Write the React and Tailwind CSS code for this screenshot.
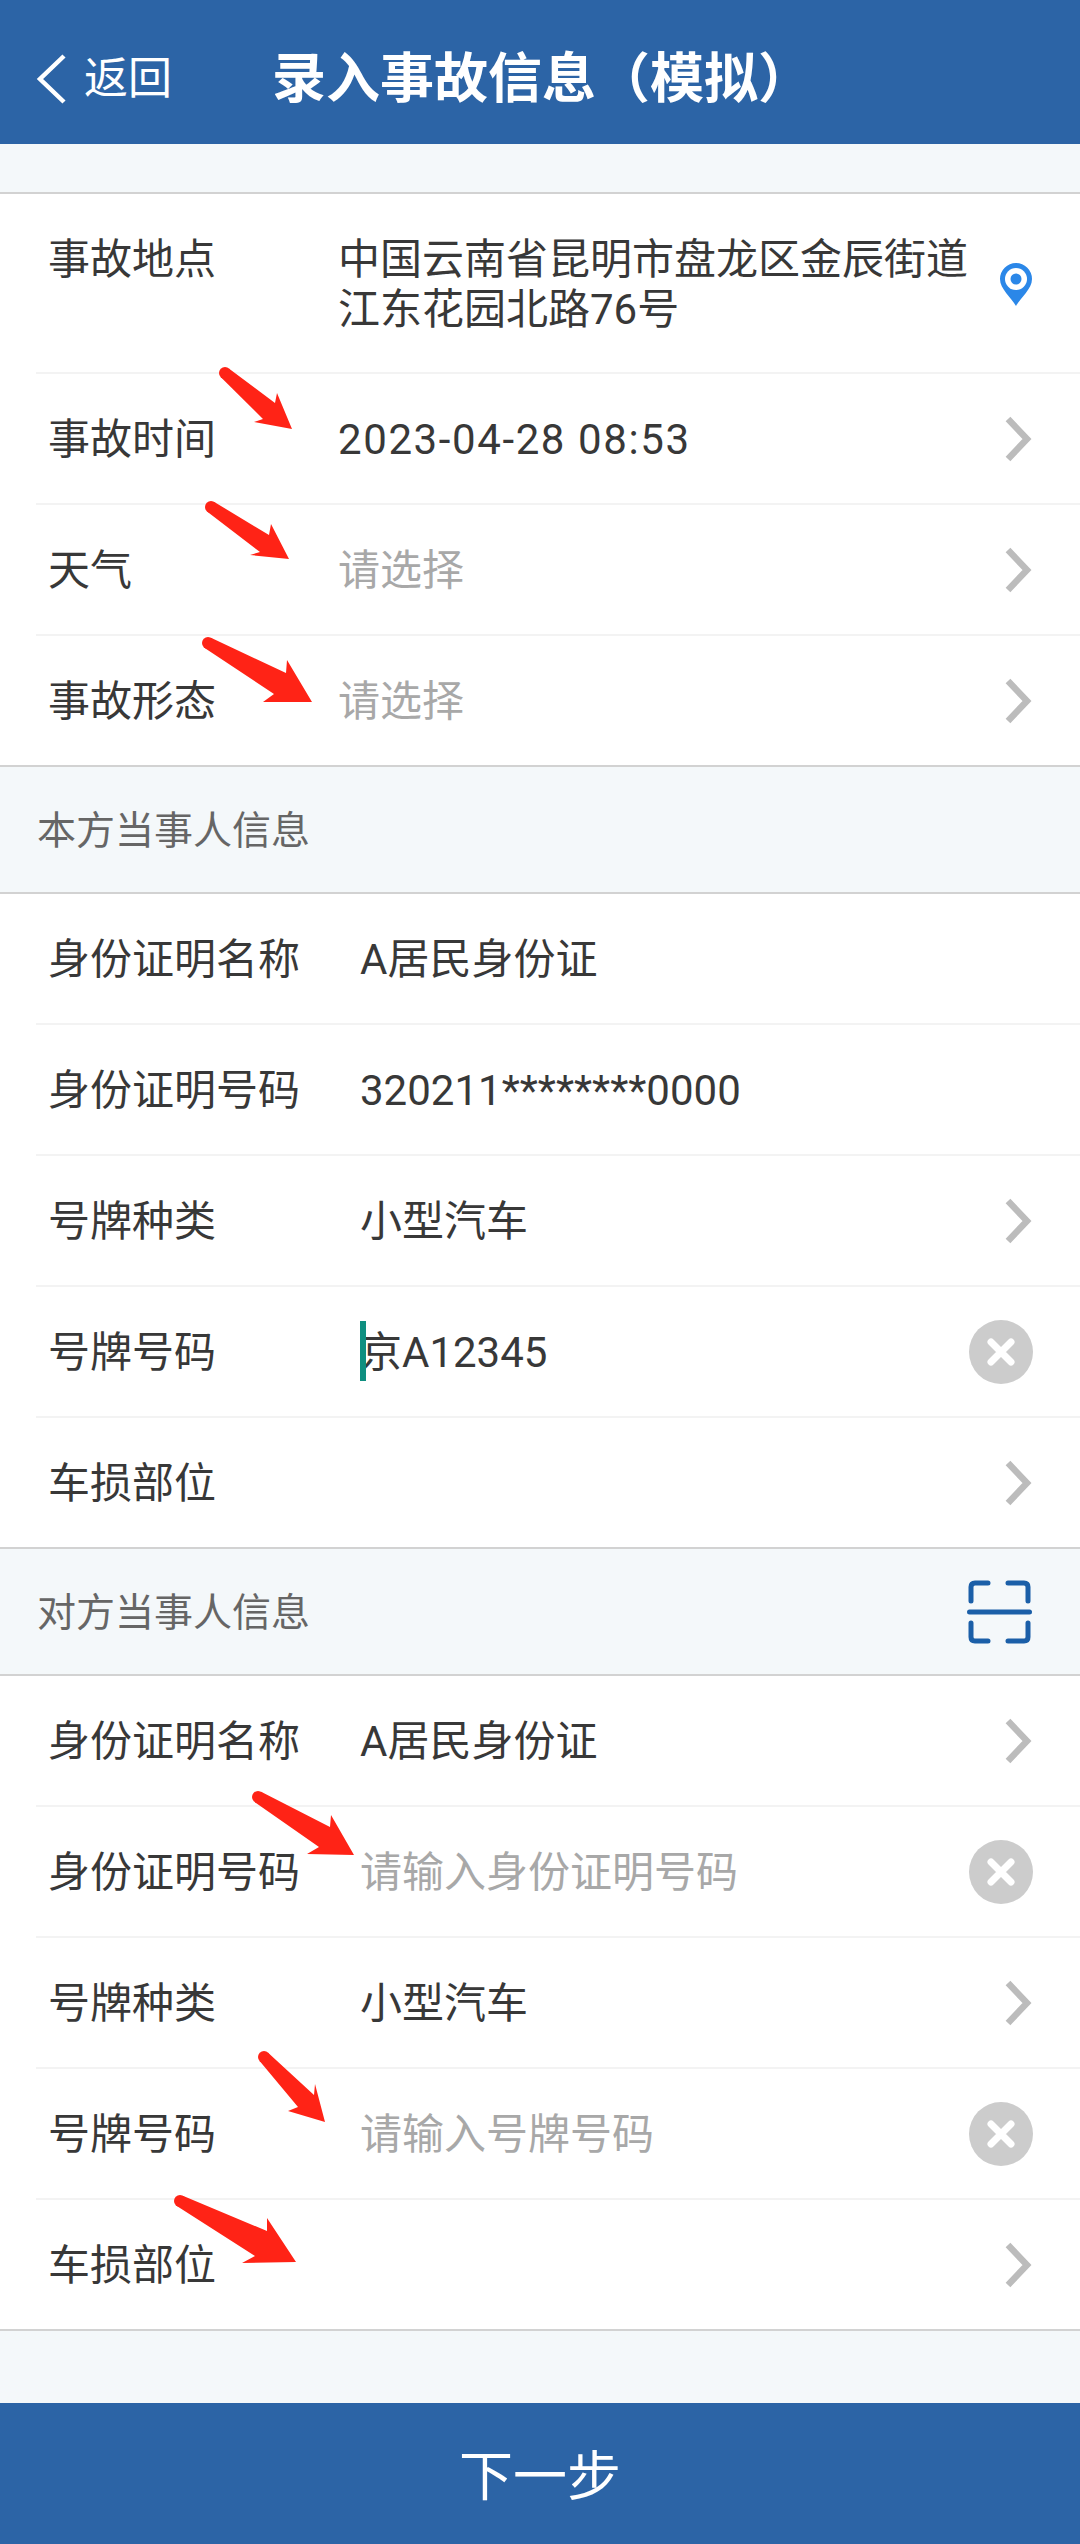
import React from "react";

const FONT = "font-['Roboto','Noto_Sans_CJK_SC',sans-serif]";

// tail centre, then the head outline: inner top, upper barb, tip, lower barb, inner bottom
const ARROWS = [
  { tail: [225, 373], head: [[275, 403], [277, 393], [292, 429], [254, 422], [263, 419]] },
  { tail: [211, 507], head: [[269, 535], [271, 524], [289, 559], [250, 555], [260, 552]] },
  { tail: [208, 643], head: [[286, 673], [287, 660], [312, 702], [263, 702], [274, 694]] },
  { tail: [258, 1797], head: [[330, 1827], [331, 1815], [354, 1855], [307, 1854], [319, 1847]] },
  { tail: [264, 2057], head: [[314, 2095], [315, 2084], [325, 2122], [288, 2111], [298, 2107]] },
  { tail: [180, 2201], head: [[267, 2231], [267, 2218], [296, 2262], [242, 2263], [255, 2256]] },
];

const RedArrows = () => (
  <svg className="absolute left-0 top-0 pointer-events-none" width="1080" height="2544">
    {ARROWS.map(({ tail, head }, i) => {
      const [tx, ty] = tail;
      const [ax, ay] = head[2];
      const len = Math.hypot(ax - tx, ay - ty);
      const nx = (-(ay - ty) / len) * 6;
      const ny = ((ax - tx) / len) * 6;
      const pts = [[tx - nx, ty - ny], ...head, [tx + nx, ty + ny]];
      return (
        <g key={i} fill="#ff2316">
          <circle cx={tx} cy={ty} r="6" />
          <polygon points={pts.map((p) => p.join(",")).join(" ")} />
        </g>
      );
    })}
  </svg>
);

const Chevron = () => (
  <svg width="28" height="46" viewBox="0 0 28 46" fill="none" className="mr-[48px]">
    <path d="M4 3 L23 23 L4 43" stroke="#bcbcbc" strokeWidth="6.5" />
  </svg>
);

const Pin = () => (
  <svg width="34" height="44" viewBox="0 0 34 44">
    <path d="M17 44 C12 35 1 27 1 17 A16 16 0 0 1 33 17 C33 27 22 35 17 44 Z" fill="#2b87e8" />
    <circle cx="17" cy="17" r="11" fill="#fff" />
    <circle cx="17" cy="17" r="5.5" fill="#2b87e8" />
  </svg>
);

const ClearBtn = () => (
  <svg width="64" height="64" viewBox="0 0 64 64" className="mr-[47px]">
    <circle cx="32" cy="32" r="32" fill="#cccccc" />
    <path d="M22 22 L42 42 M42 22 L22 42" stroke="#fff" strokeWidth="7" strokeLinecap="round" />
  </svg>
);

const ScanIcon = () => (
  <svg width="66" height="64" viewBox="0 0 66 64" fill="none" className="mr-[48px]" stroke="#1b5fa8" strokeWidth="5" strokeLinecap="round">
    <path d="M5 21 V7 Q5 3 9 3 H22" />
    <path d="M42 3 H58 Q62 3 62 7 V21" />
    <path d="M3.5 32 H63.5" />
    <path d="M5 43 V57 Q5 61 9 61 H22" />
    <path d="M42 61 H58 Q62 61 62 57 V43" />
  </svg>
);

const Row = ({ label, value, placeholder, right, labelW = "w-[324px]", valueClass = "", cursor = false }) => (
  <div className="flex items-center h-[131px] last:h-[129px] ml-[36px] border-b-2 border-[#f3f3f3] last:border-0">
    <span className={`${labelW} shrink-0 pl-3 pt-[3px] text-[42px] leading-[50px] text-[#383838]`}>{label}</span>
    <span className={`relative flex-1 pt-[3px] text-[42px] leading-[50px] ${placeholder ? "text-[#a8a8a8]" : "text-[#383838]"} ${valueClass}`}>
      {cursor && <i className="absolute left-0 top-[-4px] w-[6px] h-[60px] bg-[#0e8f80]" />}
      {value || placeholder}
    </span>
    {right === "chevron" && <Chevron />}
    {right === "clear" && <ClearBtn />}
  </div>
);

const SectionTitle = ({ children, action }) => (
  <div className="flex items-center justify-between h-[129px] shrink-0 pl-[37px] bg-[#f4f8fa] border-y-2 border-[#d2d2d2] text-[39px] text-[#666666]">
    <span className="pt-[3px]">{children}</span>
    {action}
  </div>
);

export default function App() {
  return (
    <div className={`relative flex flex-col w-[1080px] h-[2544px] overflow-hidden bg-[#f4f8fa] ${FONT}`}>
      <header className="flex items-center h-[144px] shrink-0 pt-[14px] bg-[#2c64a6] text-white">
        <div className="flex items-center w-[272px] pl-[36px] gap-[18px] shrink-0">
          <svg width="30" height="50" viewBox="0 0 30 50" fill="none">
            <path d="M28 2 L4 25 L28 48" stroke="#fff" strokeWidth="4.5" />
          </svg>
          <span className="text-[44px]">返回</span>
        </div>
        <h1 className="text-[54px] font-bold whitespace-nowrap">录入事故信息（模拟）</h1>
      </header>

      <div className="h-[50px] shrink-0 border-b-2 border-[#d2d2d2]" />

      <div className="bg-white">
        <div className="flex items-start ml-[36px] pt-[41px] pb-[37px] border-b-2 border-[#f3f3f3]">
          <span className="w-[302px] shrink-0 pl-3 text-[42px] leading-[50px] text-[#383838]">事故地点</span>
          <span className="w-[640px] shrink-0 text-[42px] leading-[50px] text-[#383838] whitespace-nowrap">
            中国云南省昆明市盘龙区金辰街道
            <br />
            江东花园北路76号
          </span>
          <span className="mt-[27px] ml-[21px]"><Pin /></span>
        </div>
        <Row labelW="w-[302px]" label="事故时间" value="2023-04-28 08:53" valueClass="tracking-[1.6px]" right="chevron" />
        <Row labelW="w-[302px]" label="天气" placeholder="请选择" right="chevron" />
        <Row labelW="w-[302px]" label="事故形态" placeholder="请选择" right="chevron" />
      </div>

      <SectionTitle>本方当事人信息</SectionTitle>
      <div className="bg-white">
        <Row label="身份证明名称" value="A居民身份证" />
        <Row label="身份证明号码" value="320211********0000" />
        <Row label="号牌种类" value="小型汽车" right="chevron" />
        <Row label="号牌号码" value="京A12345" right="clear" cursor />
        <Row label="车损部位" right="chevron" />
      </div>

      <SectionTitle action={<ScanIcon />}>对方当事人信息</SectionTitle>
      <div className="bg-white border-b-2 border-[#d2d2d2]">
        <Row label="身份证明名称" value="A居民身份证" right="chevron" />
        <Row label="身份证明号码" placeholder="请输入身份证明号码" right="clear" />
        <Row label="号牌种类" value="小型汽车" right="chevron" />
        <Row label="号牌号码" placeholder="请输入号牌号码" right="clear" />
        <Row label="车损部位" right="chevron" />
      </div>

      <footer className="mt-auto flex items-center justify-center h-[141px] shrink-0 pt-[8px] bg-[#2c64a6] text-white text-[54px]">
        下一步
      </footer>

      <RedArrows />
    </div>
  );
}
